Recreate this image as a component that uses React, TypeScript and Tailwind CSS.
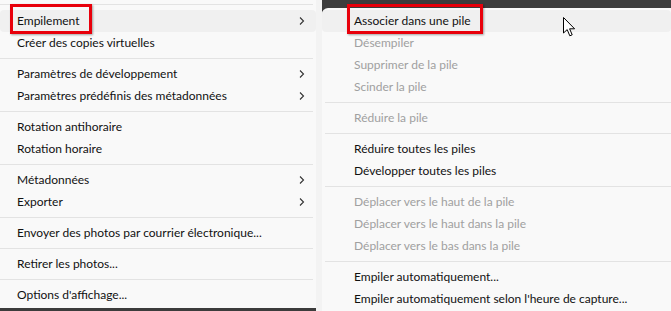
import React from "react";

type Item =
  | { kind: "sep" }
  | { kind: "item"; label: string; sub?: boolean; disabled?: boolean; hover?: boolean; boxed?: boolean };

const left: Item[] = [
  { kind: "item", label: "Empilement", sub: true, hover: true, boxed: true },
  { kind: "item", label: "Créer des copies virtuelles" },
  { kind: "sep" },
  { kind: "item", label: "Paramètres de développement", sub: true },
  { kind: "item", label: "Paramètres prédéfinis des métadonnées", sub: true },
  { kind: "sep" },
  { kind: "item", label: "Rotation antihoraire" },
  { kind: "item", label: "Rotation horaire" },
  { kind: "sep" },
  { kind: "item", label: "Métadonnées", sub: true },
  { kind: "item", label: "Exporter", sub: true },
  { kind: "sep" },
  { kind: "item", label: "Envoyer des photos par courrier électronique..." },
  { kind: "sep" },
  { kind: "item", label: "Retirer les photos..." },
  { kind: "sep" },
  { kind: "item", label: "Options d'affichage..." },
];

const right: Item[] = [
  { kind: "item", label: "Associer dans une pile", hover: true, boxed: true },
  { kind: "item", label: "Désempiler", disabled: true },
  { kind: "item", label: "Supprimer de la pile", disabled: true },
  { kind: "item", label: "Scinder la pile", disabled: true },
  { kind: "sep" },
  { kind: "item", label: "Réduire la pile", disabled: true },
  { kind: "sep" },
  { kind: "item", label: "Réduire toutes les piles" },
  { kind: "item", label: "Développer toutes les piles" },
  { kind: "sep" },
  { kind: "item", label: "Déplacer vers le haut de la pile", disabled: true },
  { kind: "item", label: "Déplacer vers le haut dans la pile", disabled: true },
  { kind: "item", label: "Déplacer vers le bas dans la pile", disabled: true },
  { kind: "sep" },
  { kind: "item", label: "Empiler automatiquement..." },
  { kind: "item", label: "Empiler automatiquement selon l'heure de capture..." },
];

function Chevron() {
  return (
    <svg width="8" height="10" viewBox="0 0 8 10" className="shrink-0">
      <path d="M2 1.5 L5.5 5 L2 8.5" fill="none" stroke="#333" strokeWidth="1.1" />
    </svg>
  );
}

function Row({ it, pad }: { it: Extract<Item, { kind: "item" }>; pad: string }) {
  return (
    <div
      className={`relative flex h-[22px] items-center justify-between ${pad} pr-[10px] ${
        it.hover ? "rounded-[4px] bg-[#f0f0f0]" : ""
      }`}
    >
      <span
        className={`relative whitespace-nowrap leading-[18px] ${it.disabled ? "text-[#a0a0a0]" : "text-[#111111]"}`}
      >
        {it.label}
        {it.boxed && (
          <span className="pointer-events-none absolute -left-[7px] -right-[12px] -top-[8px] -bottom-[4px] border-[3px] border-[#e8000b] shadow-[1px_1px_2px_rgba(0,0,0,0.35)]" />
        )}
      </span>
      {it.sub && <Chevron />}
    </div>
  );
}

function Sep({ cls }: { cls: string }) {
  return (
    <div className="flex h-[9px] items-center">
      <div className={`h-px bg-[#e3e3e3] ${cls}`} />
    </div>
  );
}

function Cursor() {
  return (
    <svg
      width="14"
      height="21"
      viewBox="0 0 14 21"
      className="absolute left-[563px] top-[17px]"
    >
      <path
        d="M0.5 0.5 L0.5 16 L4.2 12.6 L6.8 18.8 L9.2 17.8 L6.6 11.8 L11.6 11.8 Z"
        fill="#ffffff"
        stroke="#000000"
        strokeWidth="1"
        strokeLinejoin="miter"
      />
    </svg>
  );
}

export default function App() {
  return (
    <div
      className="relative flex h-[311px] w-[671px] overflow-hidden bg-[#3c3c3c] text-[12px]"
      style={{ fontFamily: '"Segoe UI", Lato, "Noto Sans", sans-serif' }}
    >
      {/* left menu */}
      <div className="flex h-[308px] w-[316px] flex-col bg-[#f9f9f9]">
        <Sep cls="w-[313px]" />
        <div className="h-px" />
        {left.map((it, i) =>
          it.kind === "sep" ? (
            <Sep key={i} cls="w-[313px]" />
          ) : (
            <Row key={i} it={it} pad="pl-[17px]" />
          )
        )}
      </div>
      {/* gap strip */}
      <div className="flex w-[6px] flex-col bg-[#f3f3f3]">
        <div className="h-[8px] bg-[#f3f3f3]" />
      </div>
      {/* right menu */}
      <div className="flex flex-1 flex-col">
        <div className="h-[8px] bg-[#3d3d3d]" />
        <div className="flex flex-1 flex-col rounded-tl-[6px] bg-[#f9f9f9] pt-[2px]">
          {right.map((it, i) =>
            it.kind === "sep" ? (
              <Sep key={i} cls="ml-[3px] w-full" />
            ) : (
              <Row key={i} it={it} pad="pl-[32px]" />
            )
          )}
        </div>
      </div>
      <Cursor />
    </div>
  );
}
